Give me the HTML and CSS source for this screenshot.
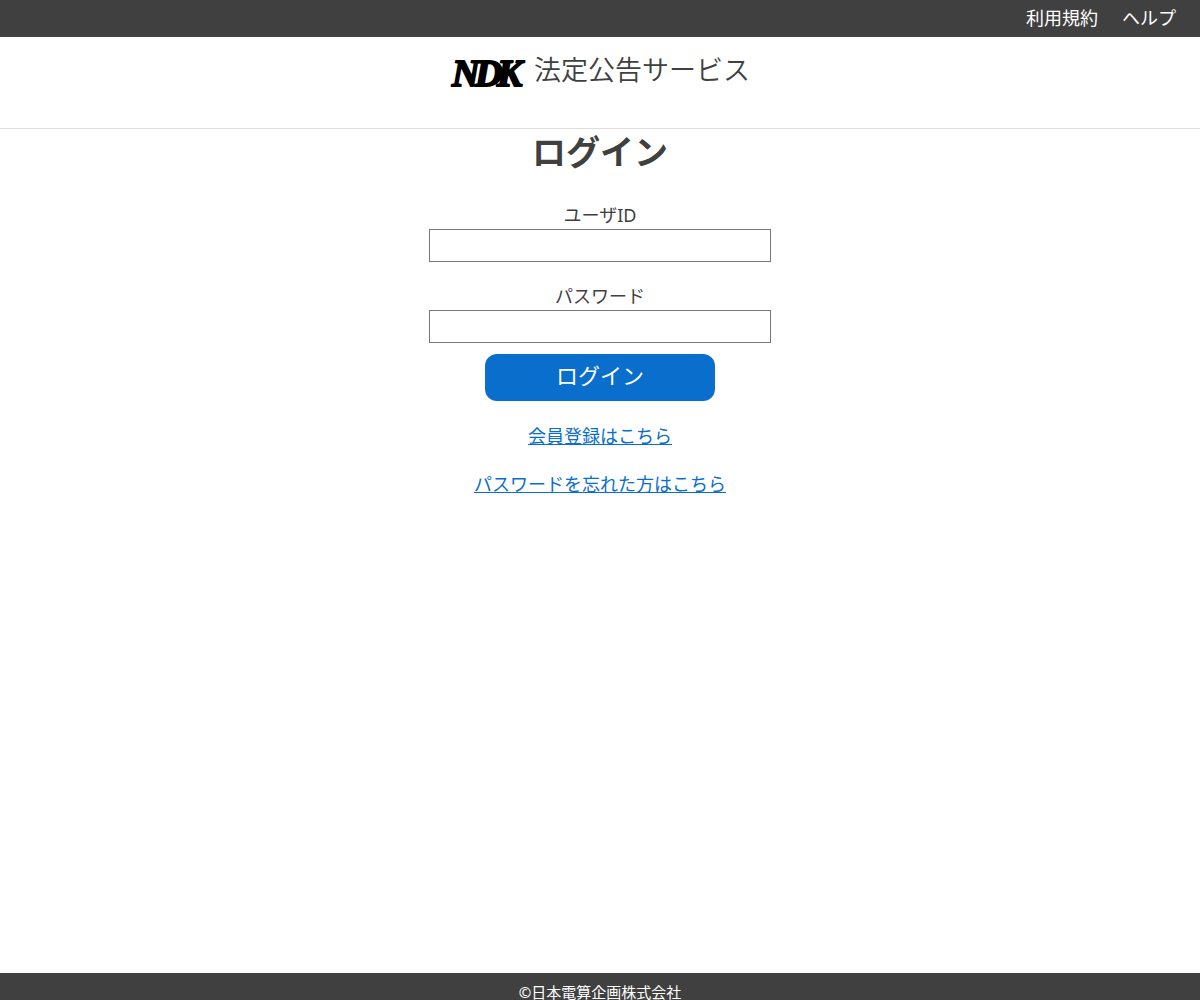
FILE: index.html
```html
<!DOCTYPE html>
<html lang="ja">
<head>
<meta charset="utf-8">
<meta name="viewport" content="width=device-width, initial-scale=1">
<title>ログイン | 法定公告サービス</title>
<link rel="stylesheet" href="styles.css">
</head>
<body>
<nav class="topbar">
  <a href="#terms">利用規約</a>
  <a href="#help">ヘルプ</a>
</nav>
<header class="brand">
  <svg class="logo" viewBox="0 0 76 36" role="img" aria-label="NDK">
    <text class="logo-text" x="2 25 47" y="34">NDK</text>
  </svg>
  <span class="service">法定公告サービス</span>
</header>
<main class="login">
  <h1>ログイン</h1>
  <form class="form">
    <div class="field">
      <label for="user">ユーザID</label>
      <input id="user" type="text" autocomplete="username">
    </div>
    <div class="field">
      <label for="password">パスワード</label>
      <input id="password" type="password" autocomplete="current-password">
    </div>
    <button type="submit">ログイン</button>
  </form>
  <div class="links">
    <a href="#register">会員登録はこちら</a>
    <a href="#reset">パスワードを忘れた方はこちら</a>
  </div>
</main>
<footer class="footer">©日本電算企画株式会社</footer>
</body>
</html>
```
FILE: styles.css
```css
* {
  box-sizing: border-box;
}

body {
  margin: 0;
  min-height: 100vh;
  display: flex;
  flex-direction: column;
  background: #fff;
  color: #404040;
  font-family: "Noto Sans", "Noto Sans CJK JP", sans-serif;
  font-size: 18px;
  line-height: 24px;
}

.topbar {
  display: flex;
  justify-content: flex-end;
  gap: 24px;
  padding: 6px 24px 7px;
  background: #404040;
}

.topbar a {
  color: #fff;
  text-decoration: none;
}

.brand {
  display: flex;
  justify-content: center;
  gap: 8px;
  padding: 15px 0 40px;
  border-bottom: 1px solid #dcdcdc;
}

.logo {
  width: 76px;
  height: 36px;
  overflow: visible;
}

.logo-text {
  font: italic bold 38px "Liberation Serif", serif;
  fill: #000;
  stroke: #000;
  stroke-width: 2px;
  stroke-linejoin: round;
}

.service {
  font-size: 27px;
  font-weight: 350;
  line-height: 36px;
}

.login {
  flex: 1;
  display: flex;
  flex-direction: column;
  align-items: center;
}

h1 {
  margin: 0 0 30px;
  font-size: 34px;
  line-height: 46px;
}

.form {
  display: flex;
  flex-direction: column;
  align-items: center;
  width: 100%;
  max-width: 342px;
}

.field {
  display: flex;
  flex-direction: column;
  align-items: center;
  width: 100%;
  margin-bottom: 24px;
}

.field:last-of-type {
  margin-bottom: 11px;
}

.field label {
  padding-bottom: 4px;
  line-height: 20px;
}

.field input {
  width: 100%;
  height: 33px;
  padding: 4px 8px;
  border: 1px solid #767676;
  border-radius: 0;
  background: #fff;
  font: inherit;
}

button {
  width: 230px;
  height: 47px;
  padding: 0 0 6px;
  border: 0;
  border-radius: 12px;
  background: #0a6ecd;
  color: #fff;
  font: inherit;
  font-size: 22px;
}

.links {
  display: flex;
  flex-direction: column;
  align-items: center;
  gap: 24px;
  padding-top: 23px;
}

.links a {
  color: #0a6ecd;
}

.footer {
  padding-top: 11px;
  background: #404040;
  color: #fff;
  font-size: 15px;
  line-height: 16px;
  text-align: center;
}
```
